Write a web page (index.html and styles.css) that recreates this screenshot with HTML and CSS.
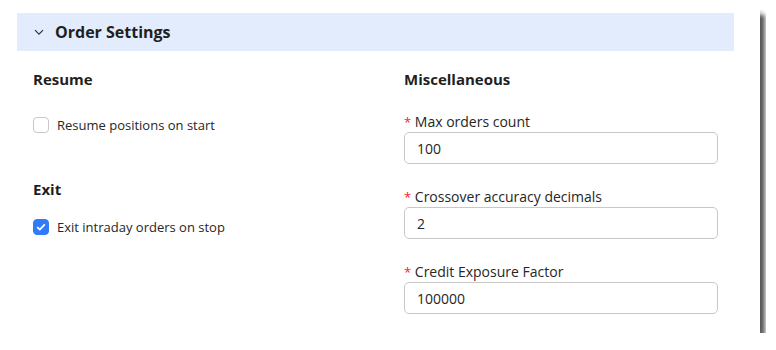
FILE: index.html
```html
<!DOCTYPE html>
<html lang="en">
<head>
  <meta charset="UTF-8" />
  <title>Order Settings</title>
  <link rel="stylesheet" href="styles.css">
</head>
<body>
  <div class="panel">
    <div class="panel-header">
      <svg class="chevron" width="10" height="7" viewBox="0 0 10 7">
        <path d="M1 1.2 L5 5.2 L9 1.2" fill="none" stroke="#333" stroke-width="1.2" />
      </svg>
      <span class="panel-title">Order Settings</span>
    </div>
    <div class="panel-body">
      <div class="col">
        <h3 class="section-title">Resume</h3>
        <label class="check check-resume">
          <span class="box"></span>
          Resume positions on start
        </label>
        <h3 class="section-title section-exit">Exit</h3>
        <label class="check check-exit">
          <span class="box checked">
            <svg width="10" height="8" viewBox="0 0 10 8"><path d="M1.2 4.2 L3.8 6.6 L8.8 1.4" fill="none" stroke="#fff" stroke-width="1.8" /></svg>
          </span>
          Exit intraday orders on stop
        </label>
      </div>
      <div class="col">
        <h3 class="section-title">Miscellaneous</h3>
        <div class="field field-first">
          <label><span class="req">*</span> Max orders count</label>
          <input type="text" value="100" />
        </div>
        <div class="field">
          <label><span class="req">*</span> Crossover accuracy decimals</label>
          <input type="text" value="2" />
        </div>
        <div class="field">
          <label><span class="req">*</span> Credit Exposure Factor</label>
          <input type="text" value="100000" />
        </div>
      </div>
    </div>
  </div>
</body>
</html>
```
FILE: styles.css
```css
body {
  margin: 10px;
  background: #fff;
  font-family: "Open Sans", "Noto Sans", sans-serif;
  color: #1f1f1f;
}
.panel {
  width: 750px;
  height: 323px;
  box-sizing: border-box;
  padding: 3px 26px 0 7px;
  background: #fff;
  box-shadow: 5px 5px 4px rgba(0, 0, 0, 0.6), 0 0 7px rgba(0, 0, 0, 0.3);
}
.panel-header {
  height: 38px;
  background: #e3ecfc;
  display: flex;
  align-items: center;
  padding-left: 17px;
}
.chevron {
  margin-right: 11px;
}
.panel-title {
  font-size: 16px;
  font-weight: 700;
  color: #1f1f1f;
}
.panel-body {
  display: grid;
  grid-template-columns: 314px 314px;
  column-gap: 57px;
  padding: 18px 16px 0;
}
.section-title {
  margin: 0;
  font-size: 15px;
  line-height: 20px;
  font-weight: 700;
  color: #1f1f1f;
}
.section-exit {
  margin-top: 44px;
}
.check {
  display: flex;
  align-items: center;
  gap: 8px;
  font-size: 13px;
  line-height: 20px;
  color: #262626;
}
.check-resume {
  margin-top: 26px;
}
.check-exit {
  margin-top: 18px;
}
.box {
  width: 16px;
  height: 16px;
  box-sizing: border-box;
  border: 1px solid #c8c8c8;
  border-radius: 4px;
  display: flex;
  align-items: center;
  justify-content: center;
  background: #fff;
}
.box.checked {
  background: #2f7cf6;
  border-color: #2f7cf6;
}
.field {
  margin-top: 23px;
}
.field label {
  display: block;
  font-size: 14px;
  line-height: 20px;
  color: #262626;
}
.req {
  color: #f5222d;
  font-size: 13px;
}
.field input {
  display: block;
  width: 100%;
  height: 32px;
  box-sizing: border-box;
  margin: 0;
  padding: 0 12px;
  border: 1px solid #c8c8c8;
  border-radius: 5px;
  font-family: "Open Sans", "Noto Sans", sans-serif;
  font-size: 14px;
  color: #262626;
  background: #fff;
}
```
